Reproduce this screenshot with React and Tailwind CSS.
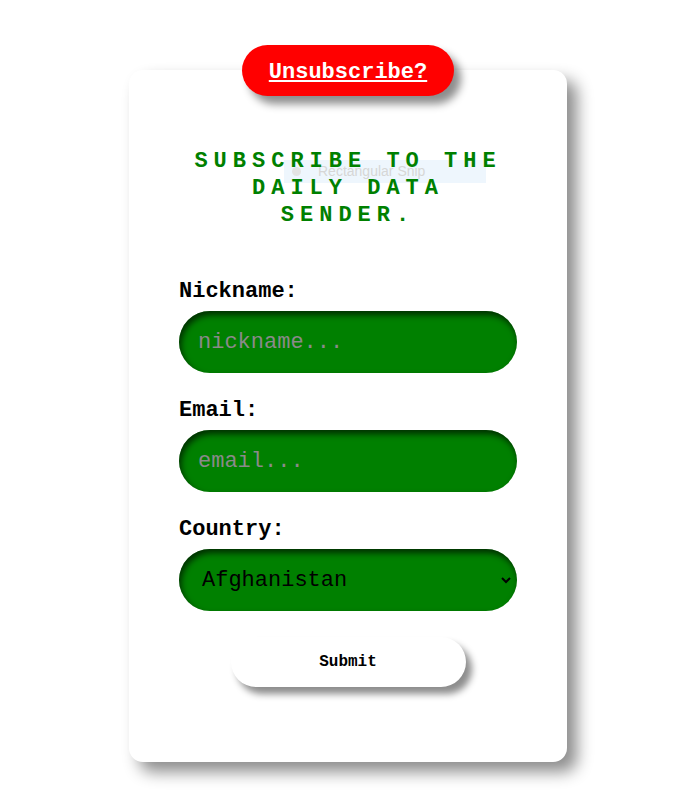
import React from 'react';

const mono = "font-['Liberation_Mono','Courier_New',monospace]";

const Field = ({ label, children, gap }) => (
  <div className={gap}>
    <label className="block text-[22px] leading-[26px] font-bold text-black mb-[6px]">{label}</label>
    {children}
  </div>
);

export default function App() {
  return (
    <div className={`min-h-screen bg-white flex justify-center pt-[45px] pl-[3px] ${mono}`}>
      <div className="flex flex-col items-center w-[438px]">
        {/* unsubscribe pill sits over the card's top edge */}
        <button className="relative z-20 w-[212px] h-[51px] -mb-[26px] pt-[4px] rounded-full bg-[#ff0000] text-white text-[22px] font-bold underline shadow-[7px_8px_8px_rgba(0,0,0,0.45)]">
          Unsubscribe?
        </button>

        <div className="relative w-full h-[692px] bg-white rounded-[14px] shadow-[10px_10px_16px_rgba(0,0,0,0.45)] px-[50px] pt-[78px]">
          {/* snipping tool hint left in the screenshot */}
          <div className="absolute left-[155px] top-[90px] w-[202px] h-[23px] bg-[#eef6fd] flex items-center z-0">
            <span className="ml-[8px] w-[9px] h-[9px] rounded-full bg-[#e3e3e3]" />
            <span className="ml-[17px] text-[14px] text-[#d6d6d6] font-['Liberation_Sans',Arial,sans-serif]">Rectangular Snip</span>
          </div>

          <div className="relative z-10 w-[330px] mx-auto">
            <h1 className="text-center text-[22px] leading-[27px] font-bold tracking-[6px] text-[#008000]">
              SUBSCRIBE TO THE DAILY DATA SENDER.
            </h1>
          </div>

          <form className="mt-[50px]" onSubmit={e => e.preventDefault()}>
            <Field label="Nickname:">
              <input
                placeholder="nickname..."
                className="w-full h-[62px] rounded-full bg-[#008000] pl-[19px] text-[22px] outline-none placeholder:text-[#8a8a8a] shadow-[inset_2px_4px_6px_rgba(0,0,0,0.65)]"
              />
            </Field>
            <Field label="Email:" gap="mt-[25px]">
              <input
                placeholder="email..."
                className="w-full h-[62px] rounded-full bg-[#008000] pl-[19px] text-[22px] outline-none placeholder:text-[#8a8a8a] shadow-[inset_2px_4px_6px_rgba(0,0,0,0.65)]"
              />
            </Field>
            <Field label="Country:" gap="mt-[25px]">
              <div className="relative">
                <select className="w-full h-[62px] rounded-full bg-[#008000] pl-[23px] text-[22px] text-black appearance-none outline-none shadow-[inset_2px_4px_6px_rgba(0,0,0,0.65)]">
                  <option>Afghanistan</option>
                  <option>Albania</option>
                  <option>Algeria</option>
                </select>
                <svg className="absolute right-[5px] top-[27px] pointer-events-none" width="12" height="8" viewBox="0 0 12 8">
                  <path d="M2 2l4 4 4-4" fill="none" stroke="#000" strokeWidth="2" />
                </svg>
              </div>
            </Field>
            <div className="flex justify-center mt-[26px]">
              <button className="w-[235px] h-[50px] rounded-full bg-white text-[16px] font-bold text-black shadow-[6px_7px_7px_rgba(0,0,0,0.45)]">
                Submit
              </button>
            </div>
          </form>
        </div>
      </div>
    </div>
  );
}
